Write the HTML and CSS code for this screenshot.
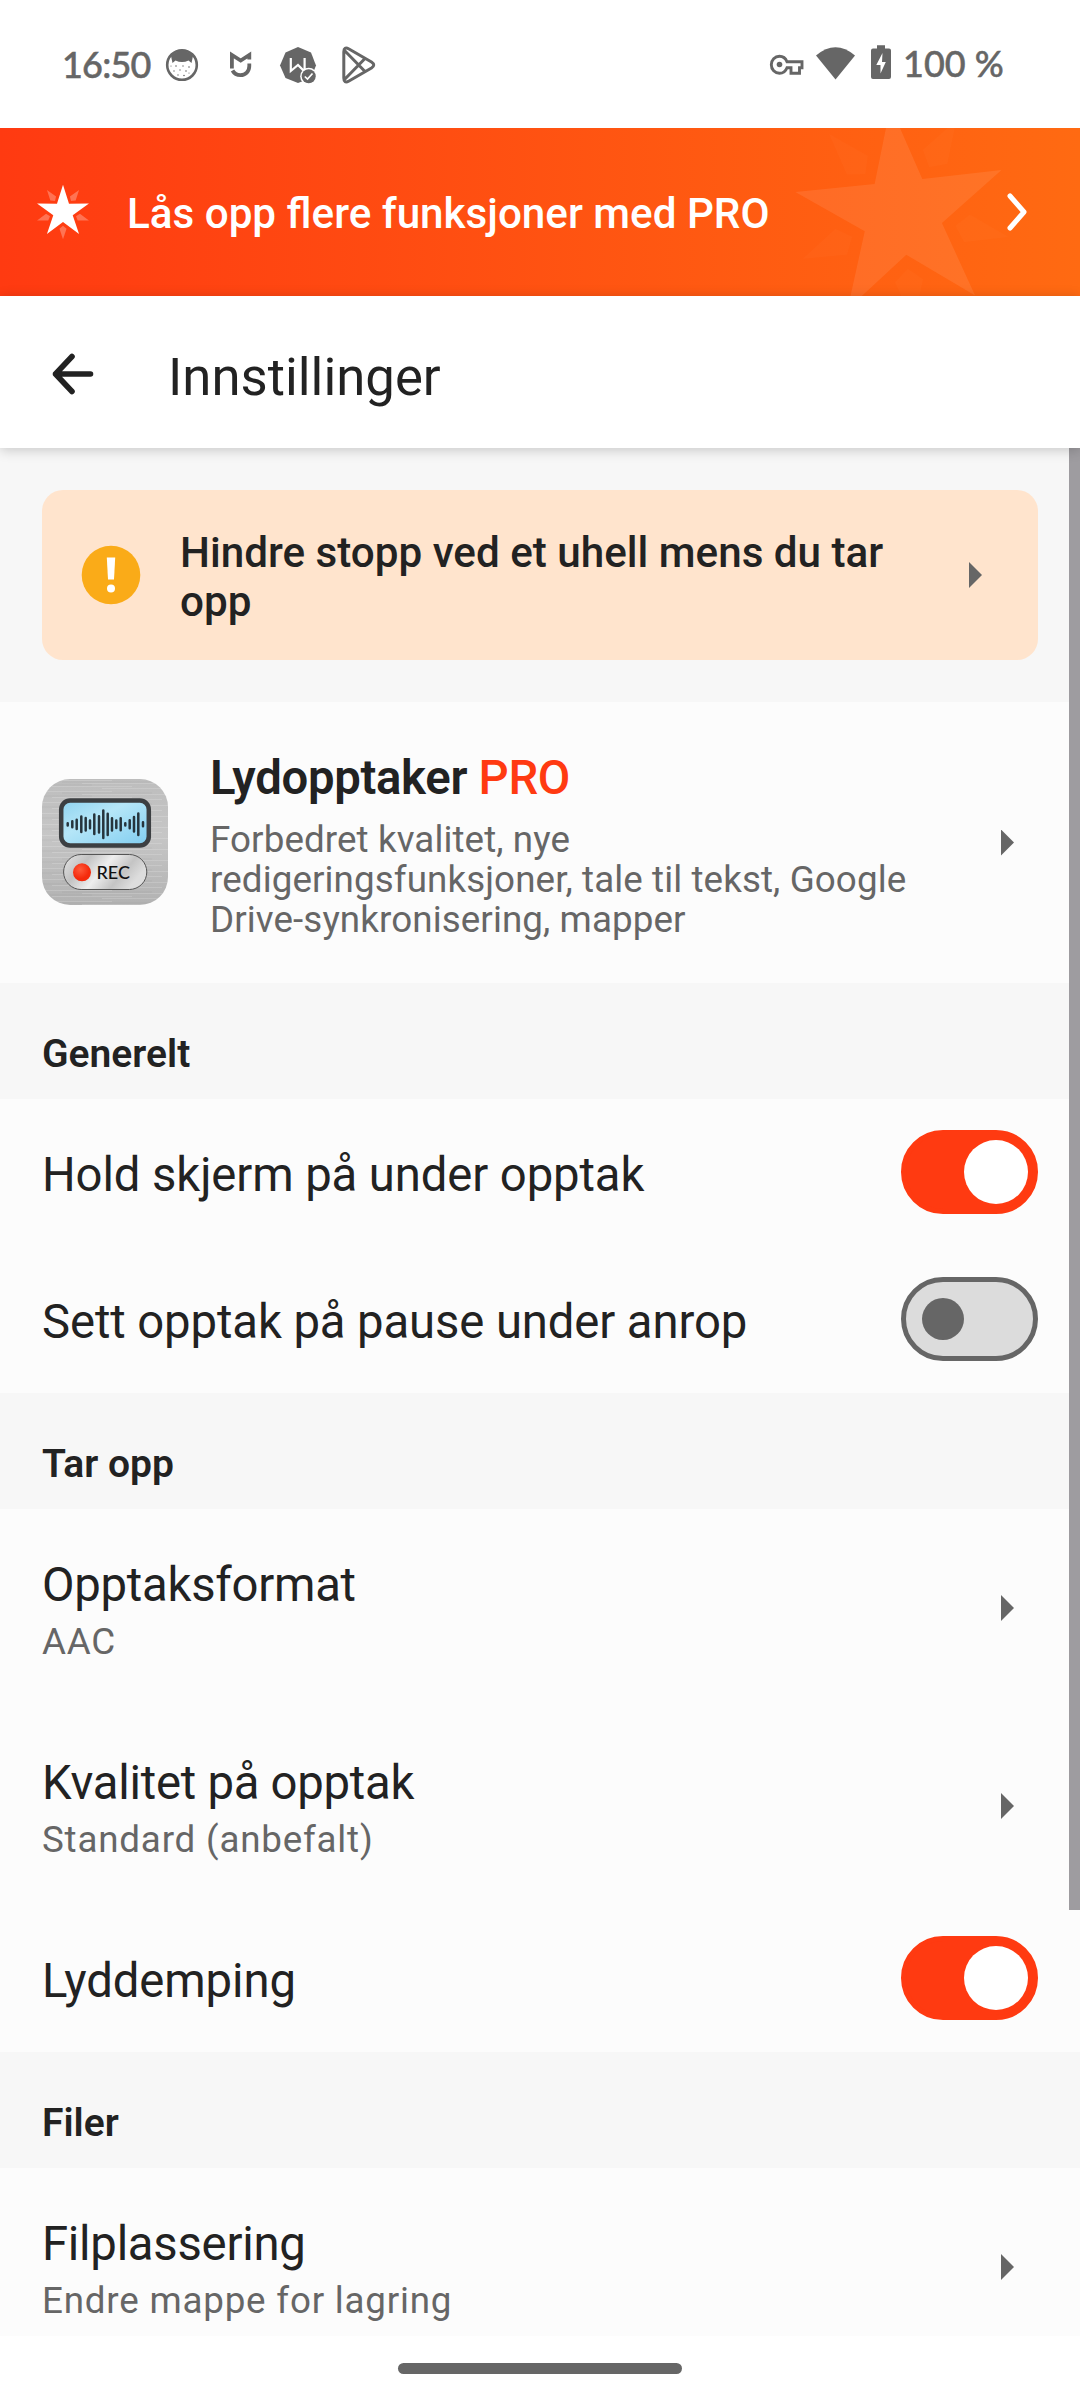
FILE: index.html
```html
<!DOCTYPE html>
<html lang="nb">
<head>
<meta charset="utf-8">
<title>Innstillinger</title>
<link rel="stylesheet" href="styles.css">
</head>
<body>
<svg class="defs" width="0" height="0" aria-hidden="true">
  <symbol id="star" viewBox="-100 -100 200 200" overflow="visible">
    <path d="M0-100 22-30.500 95.100-30.900 35.600 11.600 58.800 80.900 0 37 -58.800 80.900 -35.600 11.600 -95.100-30.900 -22-30.500Z"/>
  </symbol>
  <symbol id="rays" viewBox="-100 -100 200 200" overflow="visible">
    <g id="ray"><path d="M0 50 13 61 0 100 -13 61Z"/></g>
    <use href="#ray" transform="rotate(72)"/>
    <use href="#ray" transform="rotate(144)"/>
    <use href="#ray" transform="rotate(216)"/>
    <use href="#ray" transform="rotate(288)"/>
  </symbol>
</svg>
<div class="screen">
  <header class="status">
    <span class="time">16:50</span>
    <div class="notifs">
      <svg width="34" height="36" viewBox="165 47 34 36">
        <circle cx="182" cy="65" r="14.800" fill="none" stroke="#666" stroke-width="2.600"/>
        <path d="M171 56Q182 45 193 56L191.500 63 188.500 60.500Q182 63.500 175.500 60.500L172.500 63Z" fill="#666"/>
        <g fill="#666"><circle cx="176" cy="66" r=".8"/><circle cx="183" cy="66" r=".7"/><circle cx="189" cy="67" r=".8"/><circle cx="174" cy="71" r=".7"/><circle cx="180" cy="70" r=".7"/><circle cx="186" cy="71" r=".8"/><circle cx="178" cy="75" r=".7"/><circle cx="184" cy="75.500" r=".8"/><circle cx="171" cy="66" r=".6"/><circle cx="189" cy="73" r=".6"/></g>
      </svg>
      <svg width="24" height="36" viewBox="229 47 24 36">
        <path d="M231.900 68.500V55L240.700 60.500 249.300 55V59.500M249.300 63.500V66C249.300 71.500 245.500 75.200 240.500 75.200 236.800 75.200 234 73.300 232.500 70.500" fill="none" stroke="#666" stroke-width="3.800"/>
      </svg>
      <svg width="38" height="38" viewBox="279 46 38 38">
        <path d="M298 47 311 52.500 316 65.500 311 78 298 83 285.500 78 280 65.500 285.500 52.500Z" fill="#666"/>
        <path d="M290.800 58V71L298 65 304.600 71.500V58" fill="none" stroke="#fff" stroke-width="2.200"/>
        <circle cx="308.700" cy="76.300" r="8.500" fill="#fff"/><circle cx="308.700" cy="76.300" r="7" fill="#666"/>
        <path d="M304.800 76.500 307.500 79 312.500 73.500" fill="none" stroke="#fff" stroke-width="1.700"/>
      </svg>
      <svg width="36" height="38" viewBox="341 46 36 38">
        <path d="M343.800 52Q343.800 46 349 49L371.500 62Q376 65 371.500 68L349 81Q343.800 84 343.800 78Z M344.500 50.500 365 71.500M344.500 79.500 365 58.500" fill="none" stroke="#666" stroke-width="3" stroke-linejoin="round"/>
      </svg>
    </div>
    <div class="system">
      <svg width="36" height="36" viewBox="769 47 36 36">
        <path d="M787 61.700H802V67.700H799.500V73.300H791V67.700H787C785.600 71.300 783 73.300 779.500 73.300 774.800 73.300 771.300 69.500 771.300 64.800S774.800 56.300 779.500 56.300C783 56.300 785.600 58.300 787 61.700Z" fill="none" stroke="#666" stroke-width="2.900"/>
        <circle cx="779.500" cy="64.500" r="2.800" fill="#666"/>
      </svg>
      <svg width="40" height="36" viewBox="816 47 40 36"><path d="M816 55.500Q835.500 39 855 55.500L835.500 79.500Z" fill="#666"/></svg>
      <svg width="20" height="36" viewBox="871 46 20 36">
        <path d="M877 46.300H885V49.500H889Q891 49.500 891 51.500V78Q891 80 889 80H873Q871 80 871 78V51.500Q871 49.500 873 49.500H877Z" fill="#666"/>
        <path d="M882.500 54 876.300 66H880.500V74.500L885.800 63H882Z" fill="#fff"/>
      </svg>
      <span class="pct">100 %</span>
    </div>
  </header>

  <a class="promo">
    <svg class="promo-icon" width="54" height="54" viewBox="-27 -27 54 54">
      <use href="#rays" x="-27.300" y="-27.300" width="54.600" height="54.600" fill="#fff" fill-opacity=".28"/>
      <use href="#star" x="-27.300" y="-27.300" width="54.600" height="54.600" fill="#fff"/>
    </svg>
    <span class="promo-text">Lås opp flere funksjoner med PRO</span>
    <svg class="promo-chev" width="20" height="40" viewBox="-3 -20 20 40"><path d="M0-16 14 0 0 16" fill="none" stroke="#fff" stroke-width="5" stroke-linecap="round" stroke-linejoin="round"/></svg>
    <svg class="promo-star" width="220" height="168" viewBox="-110 -86.600 220 168">
      <g transform="rotate(-6.100)" fill="#fff">
        <use href="#star" x="-109" y="-109" width="218" height="218" fill-opacity=".085"/>
        <use href="#rays" x="-109" y="-109" width="218" height="218" fill-opacity=".02"/>
      </g>
    </svg>
  </a>

  <div class="toolbar">
    <svg width="44" height="44" viewBox="-22 -22 44 44"><path d="M17.500 0H-17.500M-1-17.500-17.500 0-1 17.500" fill="none" stroke="#222" stroke-width="5.600" stroke-linecap="round" stroke-linejoin="round"/></svg>
    <h1>Innstillinger</h1>
  </div>

  <main class="content">
    <div class="notice-wrap">
      <div class="notice">
        <svg width="60" height="60" viewBox="-30 -30 60 60"><circle r="29.300" fill="#faab18"/><path d="M-4.200-17.500H4.200L3 4.500H-3Z" fill="#fff"/><circle cy="13.500" r="4" fill="#fff"/></svg>
        <p>Hindre stopp ved et uhell mens du tar opp</p>
        <i class="arrow"></i>
      </div>
    </div>

    <div class="pro">
      <svg class="app" width="126" height="126" viewBox="0 0 126 126">
        <defs>
          <linearGradient id="metal" x1="0" y1="0" x2="0" y2="1"><stop offset="0" stop-color="#bdbdbd"/><stop offset=".45" stop-color="#c6c6c6"/><stop offset="1" stop-color="#b2b2b2"/></linearGradient>
          <linearGradient id="glass" x1="0" y1="0" x2="1" y2="1"><stop offset="0" stop-color="#8fd3ef"/><stop offset=".4" stop-color="#b5e6f8"/><stop offset="1" stop-color="#80cdf0"/></linearGradient>
          <linearGradient id="pill" x1="0" y1="0" x2="1" y2=".35"><stop offset="0" stop-color="#e6e6e6"/><stop offset=".3" stop-color="#c2c2c2"/><stop offset=".55" stop-color="#eee"/><stop offset=".8" stop-color="#c4c4c4"/><stop offset="1" stop-color="#ddd"/></linearGradient>
          <radialGradient id="red" cx=".4" cy=".35"><stop offset="0" stop-color="#ff5a3a"/><stop offset="1" stop-color="#f42a0c"/></radialGradient>
          <pattern id="brush" width="126" height="11" patternUnits="userSpaceOnUse"><path d="M0 1.500H70M40 4.500H126M10 7.500H90M60 9.500H120" stroke="#fff" stroke-opacity=".16"/><path d="M20 3H110M0 6H50" stroke="#000" stroke-opacity=".04"/></pattern>
        </defs>
        <rect width="126" height="126" rx="28" fill="url(#metal)"/>
        <rect width="126" height="126" rx="28" fill="url(#brush)"/>
        <rect x="19.200" y="21.500" width="87.600" height="45" rx="9" fill="url(#glass)" stroke="#3c3f42" stroke-width="4.500"/>
        <path d="M25.700 44.200v2.200M30.300 42.300v6M34.700 40.700v9.200M39.300 37.500v15.600M43.700 39v12.600M48 41.400v7.800M52.300 35.500v19.600M57 37.200v16.200M61.300 31.500v27.600M65.700 34.700v21.200M70 39.200v12.200M74.300 41.500v7.600M78.700 39.300v12M83.300 44.200v2.200M87.700 41.300v8M92 38v14.600M96.300 34.600v21.400M101 43.300v4" stroke="#26343c" stroke-width="2.500" stroke-linecap="round"/>
        <rect x="21.600" y="75.500" width="83.200" height="35" rx="17.500" fill="url(#pill)" stroke="#555" stroke-width="1"/>
        <circle cx="40" cy="93.300" r="9" fill="url(#red)"/>
        <text class="rec" x="54.500" y="99.800">REC</text>
      </svg>
      <div class="pro-body">
        <h2>Lydopptaker <em>PRO</em></h2>
        <p>Forbedret kvalitet, nye redigeringsfunksjoner, tale til tekst, Google Drive-synkronisering, mapper</p>
      </div>
      <i class="arrow"></i>
    </div>

    <h3>Generelt</h3>
    <section>
      <div class="row"><span class="label">Hold skjerm på under opptak</span><span class="switch on"></span></div>
      <div class="row"><span class="label">Sett opptak på pause under anrop</span><span class="switch"></span></div>
    </section>

    <h3>Tar opp</h3>
    <section>
      <div class="row two"><div><span class="label">Opptaksformat</span><span class="sub">AAC</span></div><i class="arrow"></i></div>
      <div class="row two"><div><span class="label">Kvalitet på opptak</span><span class="sub">Standard (anbefalt)</span></div><i class="arrow"></i></div>
      <div class="row"><span class="label">Lyddemping</span><span class="switch on"></span></div>
    </section>

    <h3>Filer</h3>
    <section>
      <div class="row two"><div><span class="label">Filplassering</span><span class="sub">Endre mappe for lagring</span></div><i class="arrow"></i></div>
    </section>
    <div class="scrollbar"></div>
  </main>

  <footer class="nav"><div class="handle"></div></footer>
</div>
</body>
</html>
```
FILE: styles.css
```css
* { box-sizing: border-box; }
body { margin: 0; font-family: Roboto, "Liberation Sans", sans-serif; color: #222; background: #fff; }
h1, h2, h3, p { margin: 0; }
svg { display: block; flex: none; }
.defs { position: absolute; }
.screen { width: 1080px; height: 2400px; display: flex; flex-direction: column; overflow: hidden; background: #fff; }

.status { height: 128px; flex: none; display: flex; align-items: center; padding: 2px 75px 0 62px; color: #666; font: 500 36px/44px Lato, sans-serif; -webkit-text-stroke: .5px #666; }
.time { width: 103px; margin-top: -3px; letter-spacing: -0.8px; }
.notifs { display: flex; align-items: center; }
.notifs svg:nth-child(2) { margin: 0 26px 0 30px; }
.notifs svg:nth-child(4) { margin-left: 24px; }
.system { display: flex; align-items: center; margin-left: auto; }
.system svg:nth-child(1) { margin-right: 11px; }
.system svg:nth-child(2) { margin-right: 15px; }
.system svg:nth-child(3) { margin: -4px 12px 0 0; }
.pct { width: 102px; margin-top: -5px; white-space: nowrap; }

.promo { position: relative; height: 168px; flex: none; display: flex; align-items: center; padding: 0 53px 0 36px; overflow: hidden; background: linear-gradient(90deg, #ff3a11, #ff6a12); color: #fff; }
.promo-icon { overflow: visible; }
.promo-text { flex: 1; margin-left: 37px; padding-top: 3px; font-size: 42.2px; line-height: 50px; font-weight: 500; }
.promo-star { position: absolute; left: 792px; top: 0; }

.toolbar { position: relative; z-index: 1; height: 152px; flex: none; display: flex; align-items: center; padding-left: 51px; background: #fff; box-shadow: 0 2px 12px rgba(0, 0, 0, .2); }
.toolbar h1 { margin-left: 73px; padding-top: 9px; font-size: 52.7px; line-height: 62px; font-weight: 400; }
.toolbar svg { margin-top: 4px; }

.content { position: relative; height: 1888px; flex: none; overflow: hidden; background: #f7f7f7; }
.notice-wrap { padding: 42px; }
.notice { height: 170px; display: flex; align-items: center; padding: 0 56px 0 39px; border-radius: 21px; background: #ffe4cd; }
.notice p { flex: 1; margin-left: 39px; padding: 4px 60px 0 0; font-size: 42.2px; line-height: 49px; font-weight: 500; }
.arrow { flex: none; width: 13px; height: 26px; background: #666; clip-path: polygon(0 0, 100% 50%, 0 100%); }

.pro { height: 281px; display: flex; align-items: center; padding: 0 66px 0 42px; background: #fcfcfc; }
.app { margin-top: -1px; }
.pro-body { flex: 1; align-self: flex-start; margin-left: 42px; padding: 47.5px 80px 0 0; }
.pro h2 { font-size: 47.25px; line-height: 56px; font-weight: 600; letter-spacing: -0.3px; }
.pro em { font-style: normal; font-weight: 500; color: #ff3a11; }
.pro p { margin-top: 14px; font-size: 36.75px; line-height: 40px; letter-spacing: .1px; color: #666; }
.rec { font: 500 18px Lato, sans-serif; fill: #111; }

h3 { height: 116px; padding: 46px 42px 0; font-size: 39px; line-height: 50px; font-weight: 600; letter-spacing: 0; }
section { background: #fcfcfc; }
.row { height: 147px; display: flex; align-items: center; justify-content: space-between; padding: 0 42px; }
.label { font-size: 47.25px; line-height: 56px; padding-top: 4px; letter-spacing: -0.1px; }
.two { height: 198px; padding-right: 66px; }
.two .label, .two .sub { display: block; padding: 0; }
.two .label { letter-spacing: -0.25px; }
.two > div { align-self: flex-start; padding-top: 48px; }
.two .sub { margin-top: 9px; font-size: 36.75px; line-height: 40px; color: #666; letter-spacing: .8px; }
.switch { position: relative; flex: none; margin-top: -1px; width: 137px; height: 84px; border-radius: 42px; border: 5.25px solid #666; background: #dcdcdc; }
.switch::after { content: ""; position: absolute; left: 16px; top: 16px; width: 42px; height: 42px; border-radius: 50%; background: #666; }
.switch.on { border-color: #ff3a11; background: #ff3a11; }
.switch.on::after { left: 58px; top: 5px; width: 64px; height: 64px; background: #fff; }
.scrollbar { position: absolute; right: 0; top: 0; width: 11px; height: 1462px; background: #9e9ca0; }

.nav { height: 64px; display: flex; justify-content: center; padding-top: 27px; background: #fff; }
.handle { width: 284px; height: 11px; border-radius: 5.5px; background: #666; }
```
